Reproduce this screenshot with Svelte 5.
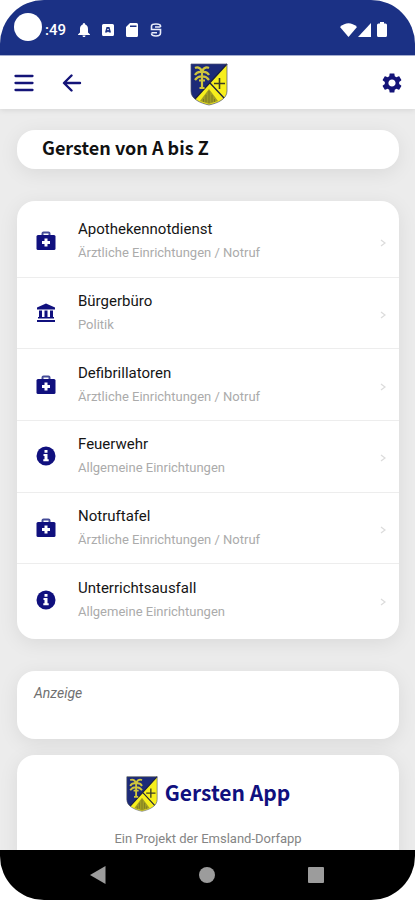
<script>
  const entries = [
    { title: 'Apothekennotdienst', category: 'Ärztliche Einrichtungen / Notruf', icon: 'medkit' },
    { title: 'Bürgerbüro', category: 'Politik', icon: 'building' },
    { title: 'Defibrillatoren', category: 'Ärztliche Einrichtungen / Notruf', icon: 'medkit' },
    { title: 'Feuerwehr', category: 'Allgemeine Einrichtungen', icon: 'info' },
    { title: 'Notruftafel', category: 'Ärztliche Einrichtungen / Notruf', icon: 'medkit' },
    { title: 'Unterrichtsausfall', category: 'Allgemeine Einrichtungen', icon: 'info' }
  ];
</script>

{#snippet crest()}
  <svg class="crest" viewBox="0 0 38 43" aria-hidden="true">
    <path d="M1 1H37V28C37 36 28 40 19 42C10 40 1 36 1 28Z" fill="#f7ef1c" />
    <path d="M1 1H37L5 36C2 34 1 31 1 28Z" fill="#1c2a78" />
    <path d="M37 1L5 36M20 20L34 35" stroke="#1c2040" stroke-width="1.300" fill="none" />
    <path d="M29.500 15V26M24 20.500H35" stroke="#3b3d25" stroke-width="1.600" />
    <path d="M10 38L19 26L28 38L19 41Z" fill="#a19d24" />
    <path d="M19 28V40M16 32V39M22 32V39M13.500 36V39M24.500 36V39" stroke="#7d7b24" stroke-width="1" />
    <path d="M12 8V25M5 5Q9 3 12 8Q15 3 19 5M5 12Q7 8 12 9Q17 8 19 12M5 17Q8 13 12 13.500Q16 13 19 17M9 17.500H15M9.500 25H14.500" stroke="#cfc53c" stroke-width="2.200" fill="none" />
    <path d="M1 1H37V28C37 36 28 40 19 42C10 40 1 36 1 28Z" fill="none" stroke="#4b5272" stroke-width="0.700" />
  </svg>
{/snippet}

<div class="phone">
  <div class="status">
    <div class="group">
      <span class="camera"></span>
      <span class="time">:49</span>
      <svg class="bell" viewBox="0 0 12 14"><path d="M6 0C7 0 7.200 .8 7.200 1.500C9.300 2.200 10 4 10 6V9.500L12 11.500V12H0V11.500L2 9.500V6C2 4 2.700 2.200 4.800 1.500C4.800 .8 5 0 6 0ZM4.500 12.500H7.500C7.500 14.500 4.500 14.500 4.500 12.500Z" fill="#fff" /></svg>
      <svg class="app" viewBox="0 0 12 14"><path fill-rule="evenodd" d="M1.500 1H10.500Q12 1 12 2.500V11.500Q12 13 10.500 13H1.500Q0 13 0 11.500V2.500Q0 1 1.500 1ZM4.500 4L3 9.500H5L6 8.500L7 9.500H9L7.500 4Z" fill="#fff" /><circle cx="6" cy="6.500" r="0.800" fill="#fff" /></svg>
      <svg class="card-icon" viewBox="0 0 12 14"><path fill-rule="evenodd" d="M4 0H10.500Q12 0 12 1.500V12.500Q12 14 10.500 14H1.500Q0 14 0 12.500V4ZM4 2.500V4H10.500V2.500Z" fill="#fff" /></svg>
      <svg class="sync" viewBox="0 0 12 14"><path d="M10.500 4V3Q10.500 1 6 1Q1.500 1 1.500 3V6.500H10.500V10Q10.500 13 6 13Q1.500 13 1.500 10.500M5 4H10.500M1.500 9.800H7" fill="none" stroke="#e8ecfa" stroke-width="1.600" /></svg>
    </div>
    <div class="group signals">
      <svg width="17" height="14" viewBox="0 0 17 14"><path d="M0 4Q8.500-3.500 17 4L8.500 14Z" fill="#fff" /></svg>
      <svg width="13" height="14" viewBox="0 0 13 14"><path d="M13 0V14H0Z" fill="#fff" /></svg>
      <svg class="battery" width="10" height="15" viewBox="0 0 10 15"><path d="M3 0H7V1.500H8.500Q10 1.500 10 3V13.500Q10 15 8.500 15H1.500Q0 15 0 13.500V3Q0 1.500 1.500 1.500H3Z" fill="#fff" /></svg>
    </div>
  </div>

  <header>
    <div class="group actions">
      <button aria-label="Menü"><svg width="20" height="18" viewBox="0 0 20 18"><path d="M1.500 2H18.500M1.500 9H18.500M1.500 16H18.500" stroke="#141478" stroke-width="2.300" stroke-linecap="round" /></svg></button>
      <button aria-label="Zurück"><svg width="20" height="18" viewBox="0 0 20 18"><path d="M18 9H3M9.500 1.500L2 9L9.500 16.500" stroke="#141478" stroke-width="2.400" fill="none" stroke-linecap="round" stroke-linejoin="round" /></svg></button>
    </div>
    {@render crest()}
    <div class="group end">
      <button aria-label="Einstellungen"><svg width="24" height="24" viewBox="0 0 24 24"><path fill="#141478" d="M19.140 12.940c.04-.3.060-.61.060-.94 0-.32-.02-.64-.07-.94l2.030-1.580c.18-.14.230-.41.120-.61l-1.920-3.320c-.12-.22-.37-.29-.59-.22l-2.390.960c-.5-.38-1.030-.7-1.620-.94l-.36-2.540c-.04-.24-.24-.41-.48-.41h-3.840c-.24 0-.43.170-.47.410l-.36 2.540c-.59.240-1.130.570-1.620.940l-2.390-.96c-.22-.08-.47 0-.59.220L2.740 8.870c-.12.210-.08.470.120.610l2.030 1.580c-.05.300-.09.630-.09.940s.02.640.070.940l-2.030 1.580c-.18.140-.23.410-.12.610l1.920 3.320c.12.220.370.290.590.220l2.390-.96c.5.380 1.030.700 1.620.940l.36 2.540c.05.240.240.410.480.410h3.840c.24 0 .44-.17.470-.41l.36-2.540c.59-.24 1.130-.56 1.620-.94l2.390.960c.22.080.470 0 .590-.22l1.920-3.320c.12-.22.070-.47-.12-.61l-2.010-1.580zM12 15.600c-1.980 0-3.600-1.620-3.600-3.600s1.620-3.600 3.600-3.600 3.600 1.620 3.600 3.600-1.620 3.600-3.600 3.600z" /></svg></button>
    </div>
  </header>

  <main>
    <h1 class="card">Gersten von A bis Z</h1>

    <ul class="card list">
      {#each entries as entry}
        <li>
          <a href="#eintrag">
            <svg class="icon" width="20" height="20" viewBox="0 0 20 20" aria-hidden="true">
              {#if entry.icon === 'medkit'}
                <path d="M6.500 5V2.500Q6.500 1.500 7.500 1.500H12.500Q13.500 1.500 13.500 2.500V5" fill="none" stroke="#454c98" stroke-width="2" />
                <rect x="0.500" y="4" width="19" height="15" rx="1.500" fill="#10107e" />
                <path d="M8.500 7.500H11.500V10H14V13H11.500V15.500H8.500V13H6V10H8.500Z" fill="#fff" />
              {:else if entry.icon === 'building'}
                <path d="M10 0.500L19 4.500V6.500H1V4.500ZM3 7.500H6V14H8.500V7.500H11.500V14H14V7.500H17V14H18V15.500H2V14H3ZM1 17H19V19H1Z" fill="#10107e" />
              {:else}
                <circle cx="10" cy="10" r="9.500" fill="#10107e" />
                <path d="M8.500 4H11.500V6.700H8.500ZM7.500 8H11.500V13.200H12.700V15.200H7.300V13.200H8.500V10H7.500Z" fill="#fff" />
              {/if}
            </svg>
            <span class="text">
              <span class="title">{entry.title}</span>
              <span class="category">{entry.category}</span>
            </span>
            <svg class="chevron" width="6" height="8" viewBox="0 0 6 8" aria-hidden="true"><path d="M1 1L5 4L1 7" fill="none" stroke="#dcdcdc" stroke-width="1.300" /></svg>
          </a>
        </li>
      {/each}
    </ul>

    <section class="card ad">Anzeige</section>

    <section class="card about">
      <div class="brand">{@render crest()}<h2>Gersten App</h2></div>
      <p>Ein Projekt der Emsland-Dorfapp</p>
    </section>
  </main>

  <nav>
    <button aria-label="Zurück"><svg width="16" height="18" viewBox="0 0 16 18"><path d="M15.500 0V18L0 9Z" fill="#9c9c9c" /></svg></button>
    <button aria-label="Startseite"><svg width="16" height="16" viewBox="0 0 16 16"><circle cx="8" cy="8" r="8" fill="#9c9c9c" /></svg></button>
    <button aria-label="Übersicht"><svg width="16" height="16" viewBox="0 0 16 16"><rect width="16" height="16" rx="1" fill="#9c9c9c" /></svg></button>
  </nav>
</div>

<style>
  :global(body) { margin: 0; background: #fff; }
  * { box-sizing: border-box; }
  svg { display: block; flex: none; }
  button { border: 0; padding: 0; background: none; cursor: pointer; }
  .phone {
    height: 100vh;
    display: flex;
    flex-direction: column;
    overflow: hidden;
    border-radius: 44px;
    background: #ececec;
    font-family: Roboto, sans-serif;
  }
  .group { display: flex; align-items: center; }
  .status {
    flex: none;
    height: 56px;
    padding: 4px 28px 0 14px;
    display: flex;
    align-items: center;
    justify-content: space-between;
    background: #1b3185;
    border-bottom: 1px solid #aab3d6;
  }
  .camera { width: 28px; height: 28px; margin-bottom: 6px; border-radius: 50%; background: #fff; }
  .time { width: 34px; padding-left: 3px; color: #fff; font-size: 15px; font-weight: 500; line-height: 20px; }
  .bell, .app, .card-icon, .sync { width: 12px; height: 14px; margin-right: 12px; }
  .bell { margin-left: 2px; }
  .signals { gap: 1px; }
  .battery { margin-left: 5px; }
  header {
    flex: none;
    height: 53px;
    padding: 0 11px 0 14px;
    display: grid;
    grid-template-columns: 1fr auto 1fr;
    align-items: center;
    background: #fff;
    box-shadow: 0 1px 6px rgba(0, 0, 0, 0.1);
    z-index: 1;
  }
  .actions { gap: 28px; }
  .end { justify-content: flex-end; }
  .crest { width: 38px; height: 43px; }
  header .crest { margin-top: 4px; }
  main { flex: 1; min-height: 0; overflow: hidden; padding: 21px 16px 0 17px; }
  .card {
    margin: 0;
    background: #fff;
    border-radius: 18px;
    box-shadow: 0 4px 20px rgba(0, 0, 0, 0.08);
  }
  h1 {
    padding: 3px 25px 8px;
    color: #111;
    font: 700 18px/28px "Noto Sans CJK SC", "Noto Sans", sans-serif;
  }
  .card.list {
    margin: 32px 0;
    padding: 4px 0;
    min-height: 438px;
    display: grid;
    grid-auto-rows: 1fr;
    list-style: none;
  }
  li { display: grid; }
  li + li { border-top: 1px solid #ededed; }
  a {
    display: flex;
    align-items: center;
    padding: 0 13px 0 19px;
    color: inherit;
    text-decoration: none;
  }
  .text { flex: 1; margin-left: 22px; }
  .chevron { margin-top: 4px; }
  .title, .category { display: block; line-height: 24px; }
  .title { color: #151515; font-size: 15px; }
  .category { color: #ababab; font-size: 13px; }
  .ad { min-height: 68px; padding: 12px 17px; color: #707070; font-size: 14px; font-style: italic; line-height: 20px; }
  .card.about { margin-top: 16px; padding: 20px 17px 24px; text-align: center; }
  .brand { display: flex; justify-content: center; align-items: center; gap: 7px; }
  .brand .crest { width: 32px; height: 38px; }
  h2 { margin: 0 0 4px; color: #10107e; font: 700 21px/32px "Noto Sans CJK SC", "Noto Sans", sans-serif; }
  p { margin: 16px 0 0; color: #858585; font-size: 13px; line-height: 20px; }
  nav {
    flex: none;
    height: 50px;
    padding: 0 91px 0 90px;
    display: flex;
    justify-content: space-between;
    align-items: center;
    background: #000;
    z-index: 1;
  }
</style>
